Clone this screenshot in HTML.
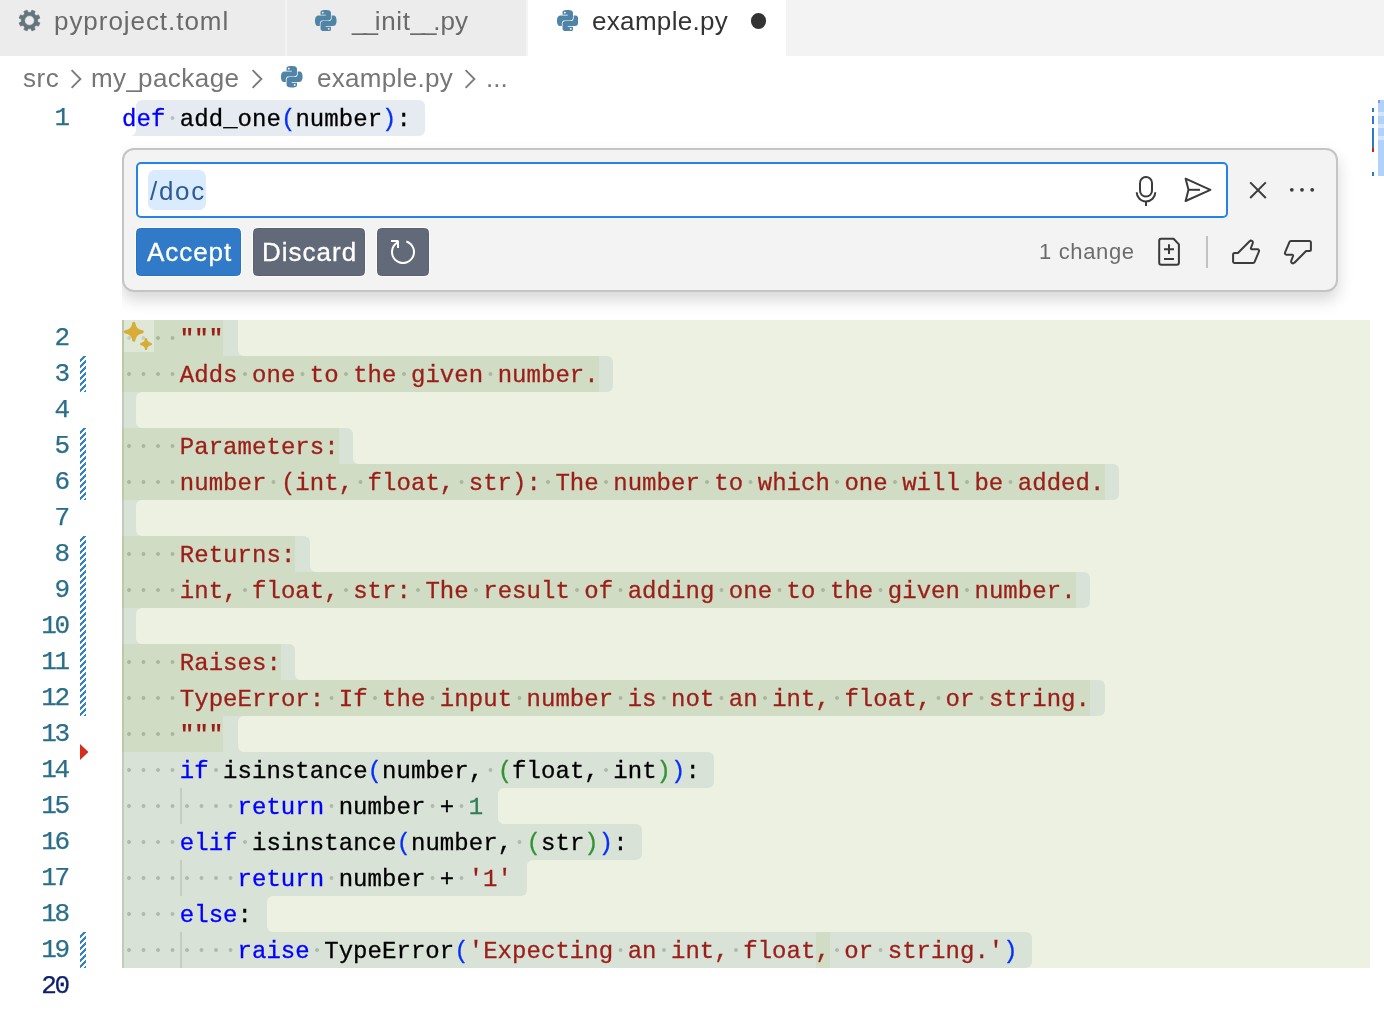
<!DOCTYPE html>
<html><head><meta charset="utf-8"><title>example.py</title>
<style>
*{box-sizing:border-box;margin:0;padding:0}
html,body{width:1384px;height:1010px;overflow:hidden;background:#fff}
body{position:relative;font-family:"Liberation Sans",sans-serif;font-size:26px;color:#333}
.abs{position:absolute}
.ui{position:absolute;white-space:nowrap;line-height:30px;font-size:26px;will-change:transform}
.ln{position:absolute;left:0;width:68px;text-align:right;font-family:"Liberation Mono",monospace;font-size:26px;line-height:36px;height:36px;letter-spacing:-2.2px;margin-top:0px;padding-right:0;-webkit-text-stroke:.25px currentColor;will-change:transform}
.cl{position:absolute;left:122px;height:36px;line-height:36px;font-family:"Liberation Mono",monospace;font-size:24px;letter-spacing:0.047px;white-space:pre;margin-top:1.6px;will-change:transform}
.cl span{-webkit-text-stroke:.3px currentColor}
.cl i{display:inline-block;width:14.45px;height:36px;vertical-align:top;margin-top:-1.6px;letter-spacing:0;background:radial-gradient(circle at 50% 50%, rgba(60,70,60,.26) 1.5px, transparent 2.3px)}
.hatch{background:linear-gradient(135deg,transparent 25%,#3282CE 25%,#3282CE 50%,transparent 50%,transparent 75%,#3282CE 75%);background-size:6px 6px;background-position:0 1px}
</style></head><body>
<!-- TABS -->
<div class="abs" style="left:0;top:0;width:1384px;height:56px;background:#F3F3F3"></div>
<div class="abs" style="left:0;top:0;width:285px;height:56px;background:#ECECEC"></div>
<div class="abs" style="left:287px;top:0;width:239px;height:56px;background:#ECECEC"></div>
<div class="abs" style="left:528px;top:0;width:258px;height:56px;background:#FFFFFF"></div>
<svg class="abs" style="left:0;top:0" width="60" height="56" viewBox="0 0 60 56"><path fill="#64747D" fill-rule="evenodd" stroke="#64747D" stroke-width="0.8" stroke-linejoin="round" d="M30.85 12.41 L31.89 10.17 L35.11 11.51 L34.27 13.83 L36.17 15.73 L38.49 14.89 L39.83 18.11 L37.59 19.15 L37.59 21.85 L39.83 22.89 L38.49 26.11 L36.17 25.27 L34.27 27.17 L35.11 29.49 L31.89 30.83 L30.85 28.59 L28.15 28.59 L27.11 30.83 L23.89 29.49 L24.73 27.17 L22.83 25.27 L20.51 26.11 L19.17 22.89 L21.41 21.85 L21.41 19.15 L19.17 18.11 L20.51 14.89 L22.83 15.73 L24.73 13.83 L23.89 11.51 L27.11 10.17 L28.15 12.41Z M24.60 20.50 a4.9 4.9 0 1 0 9.8 0 a4.9 4.9 0 1 0 -9.8 0Z"/></svg>
<div class="ui" id="t1" style="left:54.3px;top:6.3px;color:#6A6A6A;letter-spacing:.95px">pyproject.toml</div>
<svg class="abs" style="left:315.3px;top:9.8px" width="21.5" height="21.5" viewBox="0 0 24 24"><path fill="#5084A7" d="M14.25.18l.9.2.73.26.59.3.45.32.34.34.25.34.16.33.1.3.04.26.02.2-.01.13V8.5l-.05.63-.13.55-.21.46-.26.38-.3.31-.33.25-.35.19-.35.14-.33.1-.3.07-.26.04-.21.02H8.77l-.69.05-.59.14-.5.22-.41.27-.33.32-.27.35-.2.36-.15.37-.1.35-.07.32-.04.27-.02.21v3.06H3.17l-.21-.03-.28-.07-.32-.12-.35-.18-.36-.26-.36-.36-.35-.46-.32-.59-.28-.73-.21-.88-.14-1.05-.05-1.23.06-1.22.16-1.04.24-.87.32-.71.36-.57.4-.44.42-.33.42-.24.4-.16.36-.1.32-.05.24-.01h.16l.06.01h8.16v-.83H6.18l-.01-2.75-.02-.37.05-.34.11-.31.17-.28.25-.26.31-.23.38-.2.44-.18.51-.15.58-.12.64-.1.71-.06.77-.04.84-.02 1.27.05zm-6.3 1.98l-.23.33-.08.41.08.41.23.34.33.22.41.09.41-.09.33-.22.23-.34.08-.41-.08-.41-.23-.33-.33-.22-.41-.09-.41.09zm13.09 3.95l.28.06.32.12.35.18.36.27.36.35.35.47.32.59.28.73.21.88.14 1.04.05 1.23-.06 1.23-.16 1.04-.24.86-.32.71-.36.57-.4.45-.42.33-.42.24-.4.16-.36.09-.32.05-.24.02-.16-.01h-8.22v.82h5.84l.01 2.76.02.36-.05.34-.11.31-.17.29-.25.25-.31.24-.38.2-.44.17-.51.15-.58.13-.64.09-.71.07-.77.04-.84.01-1.27-.04-1.07-.14-.9-.2-.73-.25-.59-.3-.45-.33-.34-.34-.25-.34-.16-.33-.1-.3-.04-.25-.02-.2.01-.13v-5.34l.05-.64.13-.54.21-.46.26-.38.3-.32.33-.24.35-.2.35-.14.33-.1.3-.06.26-.04.21-.02.13-.01h5.84l.69-.05.59-.14.5-.21.41-.28.33-.32.27-.35.2-.36.15-.36.1-.35.07-.32.04-.28.02-.21V6.07h2.09l.14.01zm-6.47 14.25l-.23.33-.08.41.08.41.23.33.33.23.41.08.41-.08.33-.23.23-.33.08-.41-.08-.41-.23-.33-.33-.23-.41-.08-.41.08z"/></svg>
<div class="ui" id="t2" style="left:352px;top:6.3px;color:#6A6A6A"><span style="letter-spacing:-3.05px">__</span><span style="letter-spacing:.6px">init</span><span style="letter-spacing:-3.05px">__</span>.py</div>
<svg class="abs" style="left:556.8px;top:9.8px" width="21.5" height="21.5" viewBox="0 0 24 24"><path fill="#5084A7" d="M14.25.18l.9.2.73.26.59.3.45.32.34.34.25.34.16.33.1.3.04.26.02.2-.01.13V8.5l-.05.63-.13.55-.21.46-.26.38-.3.31-.33.25-.35.19-.35.14-.33.1-.3.07-.26.04-.21.02H8.77l-.69.05-.59.14-.5.22-.41.27-.33.32-.27.35-.2.36-.15.37-.1.35-.07.32-.04.27-.02.21v3.06H3.17l-.21-.03-.28-.07-.32-.12-.35-.18-.36-.26-.36-.36-.35-.46-.32-.59-.28-.73-.21-.88-.14-1.05-.05-1.23.06-1.22.16-1.04.24-.87.32-.71.36-.57.4-.44.42-.33.42-.24.4-.16.36-.1.32-.05.24-.01h.16l.06.01h8.16v-.83H6.18l-.01-2.75-.02-.37.05-.34.11-.31.17-.28.25-.26.31-.23.38-.2.44-.18.51-.15.58-.12.64-.1.71-.06.77-.04.84-.02 1.27.05zm-6.3 1.98l-.23.33-.08.41.08.41.23.34.33.22.41.09.41-.09.33-.22.23-.34.08-.41-.08-.41-.23-.33-.33-.22-.41-.09-.41.09zm13.09 3.95l.28.06.32.12.35.18.36.27.36.35.35.47.32.59.28.73.21.88.14 1.04.05 1.23-.06 1.23-.16 1.04-.24.86-.32.71-.36.57-.4.45-.42.33-.42.24-.4.16-.36.09-.32.05-.24.02-.16-.01h-8.22v.82h5.84l.01 2.76.02.36-.05.34-.11.31-.17.29-.25.25-.31.24-.38.2-.44.17-.51.15-.58.13-.64.09-.71.07-.77.04-.84.01-1.27-.04-1.07-.14-.9-.2-.73-.25-.59-.3-.45-.33-.34-.34-.25-.34-.16-.33-.1-.3-.04-.25-.02-.2.01-.13v-5.34l.05-.64.13-.54.21-.46.26-.38.3-.32.33-.24.35-.2.35-.14.33-.1.3-.06.26-.04.21-.02.13-.01h5.84l.69-.05.59-.14.5-.21.41-.28.33-.32.27-.35.2-.36.15-.36.1-.35.07-.32.04-.28.02-.21V6.07h2.09l.14.01zm-6.47 14.25l-.23.33-.08.41.08.41.23.33.33.23.41.08.41-.08.33-.23.23-.33.08-.41-.08-.41-.23-.33-.33-.23-.41-.08-.41.08z"/></svg>
<div class="ui" id="t3" style="left:592.3px;top:6.3px;color:#333;letter-spacing:.32px">example.py</div>
<div class="abs" style="left:750.5px;top:13.4px;width:15.2px;height:15.2px;border-radius:50%;background:#333"></div>
<div class="ui" id="b1" style="left:22.5px;top:63.4px;color:#767676;letter-spacing:.5px">src</div>
<svg class="abs" style="left:68.3px;top:66.7px" width="16" height="24" viewBox="0 0 16 24"><path d="M3.6 3.2 L12.4 12 L3.6 20.8" fill="none" stroke="#7B7B7B" stroke-width="1.9" stroke-linejoin="miter"/></svg>
<div class="ui" id="b2" style="left:91.4px;top:63.4px;color:#767676;letter-spacing:.45px">my<span style="letter-spacing:-3px">_</span>package</div>
<svg class="abs" style="left:249.3px;top:66.7px" width="16" height="24" viewBox="0 0 16 24"><path d="M3.6 3.2 L12.4 12 L3.6 20.8" fill="none" stroke="#7B7B7B" stroke-width="1.9" stroke-linejoin="miter"/></svg>
<svg class="abs" style="left:281px;top:66.4px" width="21.5" height="21.5" viewBox="0 0 24 24"><path fill="#5084A7" d="M14.25.18l.9.2.73.26.59.3.45.32.34.34.25.34.16.33.1.3.04.26.02.2-.01.13V8.5l-.05.63-.13.55-.21.46-.26.38-.3.31-.33.25-.35.19-.35.14-.33.1-.3.07-.26.04-.21.02H8.77l-.69.05-.59.14-.5.22-.41.27-.33.32-.27.35-.2.36-.15.37-.1.35-.07.32-.04.27-.02.21v3.06H3.17l-.21-.03-.28-.07-.32-.12-.35-.18-.36-.26-.36-.36-.35-.46-.32-.59-.28-.73-.21-.88-.14-1.05-.05-1.23.06-1.22.16-1.04.24-.87.32-.71.36-.57.4-.44.42-.33.42-.24.4-.16.36-.1.32-.05.24-.01h.16l.06.01h8.16v-.83H6.18l-.01-2.75-.02-.37.05-.34.11-.31.17-.28.25-.26.31-.23.38-.2.44-.18.51-.15.58-.12.64-.1.71-.06.77-.04.84-.02 1.27.05zm-6.3 1.98l-.23.33-.08.41.08.41.23.34.33.22.41.09.41-.09.33-.22.23-.34.08-.41-.08-.41-.23-.33-.33-.22-.41-.09-.41.09zm13.09 3.95l.28.06.32.12.35.18.36.27.36.35.35.47.32.59.28.73.21.88.14 1.04.05 1.23-.06 1.23-.16 1.04-.24.86-.32.71-.36.57-.4.45-.42.33-.42.24-.4.16-.36.09-.32.05-.24.02-.16-.01h-8.22v.82h5.84l.01 2.76.02.36-.05.34-.11.31-.17.29-.25.25-.31.24-.38.2-.44.17-.51.15-.58.13-.64.09-.71.07-.77.04-.84.01-1.27-.04-1.07-.14-.9-.2-.73-.25-.59-.3-.45-.33-.34-.34-.25-.34-.16-.33-.1-.3-.04-.25-.02-.2.01-.13v-5.34l.05-.64.13-.54.21-.46.26-.38.3-.32.33-.24.35-.2.35-.14.33-.1.3-.06.26-.04.21-.02.13-.01h5.84l.69-.05.59-.14.5-.21.41-.28.33-.32.27-.35.2-.36.15-.36.1-.35.07-.32.04-.28.02-.21V6.07h2.09l.14.01zm-6.47 14.25l-.23.33-.08.41.08.41.23.33.33.23.41.08.41-.08.33-.23.23-.33.08-.41-.08-.41-.23-.33-.33-.23-.41-.08-.41.08z"/></svg>
<div class="ui" id="b3" style="left:316.8px;top:63.4px;color:#767676;letter-spacing:.31px">example.py</div>
<svg class="abs" style="left:462px;top:66.7px" width="16" height="24" viewBox="0 0 16 24"><path d="M3.6 3.2 L12.4 12 L3.6 20.8" fill="none" stroke="#7B7B7B" stroke-width="1.9" stroke-linejoin="miter"/></svg>
<div class="ui" id="b4" style="left:486px;top:63.4px;color:#767676">...</div>
<!-- CODE -->
<div class="abs" style="left:122px;top:320px;width:1248px;height:648px;background:#EDF1E1"></div>
<div class="abs" style="left:136.4px;top:100px;width:289.0px;height:36px;background:#E5EBF1;border-radius:6px 6px 6px 0"></div>
<div class="abs" style="left:130.4px;top:130px;width:6px;height:6px;background:radial-gradient(circle at 0% 0%, transparent 5.5px, #E5EBF1 6.5px)"></div>
<div class="abs" style="left:122px;top:320px;width:115.6px;height:36px;background:#D8E2D7;border-radius:0 0px 0px 0"></div>
<div class="abs" style="left:237.6px;top:350px;width:6px;height:6px;background:radial-gradient(circle at 100% 0%, transparent 5.5px, #D8E2D7 6.5px)"></div>
<div class="abs" style="left:122px;top:356px;width:491.3px;height:36px;background:#D8E2D7;border-radius:0 6px 6px 0"></div>
<div class="abs" style="left:122px;top:392px;width:14.4px;height:36px;background:#D8E2D7;border-radius:0 0px 0px 0"></div>
<div class="abs" style="left:136.4px;top:392px;width:6px;height:6px;background:radial-gradient(circle at 100% 100%, transparent 5.5px, #D8E2D7 6.5px)"></div>
<div class="abs" style="left:136.4px;top:422px;width:6px;height:6px;background:radial-gradient(circle at 100% 0%, transparent 5.5px, #D8E2D7 6.5px)"></div>
<div class="abs" style="left:122px;top:428px;width:231.2px;height:36px;background:#D8E2D7;border-radius:0 6px 0px 0"></div>
<div class="abs" style="left:353.2px;top:458px;width:6px;height:6px;background:radial-gradient(circle at 100% 0%, transparent 5.5px, #D8E2D7 6.5px)"></div>
<div class="abs" style="left:122px;top:464px;width:997.0px;height:36px;background:#D8E2D7;border-radius:0 6px 6px 0"></div>
<div class="abs" style="left:122px;top:500px;width:14.4px;height:36px;background:#D8E2D7;border-radius:0 0px 0px 0"></div>
<div class="abs" style="left:136.4px;top:500px;width:6px;height:6px;background:radial-gradient(circle at 100% 100%, transparent 5.5px, #D8E2D7 6.5px)"></div>
<div class="abs" style="left:136.4px;top:530px;width:6px;height:6px;background:radial-gradient(circle at 100% 0%, transparent 5.5px, #D8E2D7 6.5px)"></div>
<div class="abs" style="left:122px;top:536px;width:187.8px;height:36px;background:#D8E2D7;border-radius:0 6px 0px 0"></div>
<div class="abs" style="left:309.9px;top:566px;width:6px;height:6px;background:radial-gradient(circle at 100% 0%, transparent 5.5px, #D8E2D7 6.5px)"></div>
<div class="abs" style="left:122px;top:572px;width:968.1px;height:36px;background:#D8E2D7;border-radius:0 6px 6px 0"></div>
<div class="abs" style="left:122px;top:608px;width:14.4px;height:36px;background:#D8E2D7;border-radius:0 0px 0px 0"></div>
<div class="abs" style="left:136.4px;top:608px;width:6px;height:6px;background:radial-gradient(circle at 100% 100%, transparent 5.5px, #D8E2D7 6.5px)"></div>
<div class="abs" style="left:136.4px;top:638px;width:6px;height:6px;background:radial-gradient(circle at 100% 0%, transparent 5.5px, #D8E2D7 6.5px)"></div>
<div class="abs" style="left:122px;top:644px;width:173.4px;height:36px;background:#D8E2D7;border-radius:0 6px 0px 0"></div>
<div class="abs" style="left:295.4px;top:674px;width:6px;height:6px;background:radial-gradient(circle at 100% 0%, transparent 5.5px, #D8E2D7 6.5px)"></div>
<div class="abs" style="left:122px;top:680px;width:982.6px;height:36px;background:#D8E2D7;border-radius:0 6px 6px 0"></div>
<div class="abs" style="left:122px;top:716px;width:115.6px;height:36px;background:#D8E2D7;border-radius:0 0px 0px 0"></div>
<div class="abs" style="left:237.6px;top:716px;width:6px;height:6px;background:radial-gradient(circle at 100% 100%, transparent 5.5px, #D8E2D7 6.5px)"></div>
<div class="abs" style="left:237.6px;top:746px;width:6px;height:6px;background:radial-gradient(circle at 100% 0%, transparent 5.5px, #D8E2D7 6.5px)"></div>
<div class="abs" style="left:122px;top:752px;width:592.4px;height:36px;background:#D8E2D7;border-radius:0 6px 6px 0"></div>
<div class="abs" style="left:122px;top:788px;width:375.7px;height:36px;background:#D8E2D7;border-radius:0 0px 0px 0"></div>
<div class="abs" style="left:497.7px;top:788px;width:6px;height:6px;background:radial-gradient(circle at 100% 100%, transparent 5.5px, #D8E2D7 6.5px)"></div>
<div class="abs" style="left:497.7px;top:818px;width:6px;height:6px;background:radial-gradient(circle at 100% 0%, transparent 5.5px, #D8E2D7 6.5px)"></div>
<div class="abs" style="left:122px;top:824px;width:520.2px;height:36px;background:#D8E2D7;border-radius:0 6px 6px 0"></div>
<div class="abs" style="left:122px;top:860px;width:404.6px;height:36px;background:#D8E2D7;border-radius:0 0px 6px 0"></div>
<div class="abs" style="left:526.6px;top:860px;width:6px;height:6px;background:radial-gradient(circle at 100% 100%, transparent 5.5px, #D8E2D7 6.5px)"></div>
<div class="abs" style="left:122px;top:896px;width:144.5px;height:36px;background:#D8E2D7;border-radius:0 0px 0px 0"></div>
<div class="abs" style="left:266.5px;top:896px;width:6px;height:6px;background:radial-gradient(circle at 100% 100%, transparent 5.5px, #D8E2D7 6.5px)"></div>
<div class="abs" style="left:266.5px;top:926px;width:6px;height:6px;background:radial-gradient(circle at 100% 0%, transparent 5.5px, #D8E2D7 6.5px)"></div>
<div class="abs" style="left:122px;top:932px;width:910.3px;height:36px;background:#D8E2D7;border-radius:0 6px 6px 0"></div>
<div class="abs" style="left:122px;top:320px;width:101.1px;height:36px;background:#D0DDC4"></div>
<div class="abs" style="left:122px;top:356px;width:476.8px;height:36px;background:#D0DDC4"></div>
<div class="abs" style="left:122px;top:428px;width:216.8px;height:36px;background:#D0DDC4"></div>
<div class="abs" style="left:122px;top:464px;width:982.6px;height:36px;background:#D0DDC4"></div>
<div class="abs" style="left:122px;top:536px;width:173.4px;height:36px;background:#D0DDC4"></div>
<div class="abs" style="left:122px;top:572px;width:953.7px;height:36px;background:#D0DDC4"></div>
<div class="abs" style="left:122px;top:644px;width:158.9px;height:36px;background:#D0DDC4"></div>
<div class="abs" style="left:122px;top:680px;width:968.1px;height:36px;background:#D0DDC4"></div>
<div class="abs" style="left:122px;top:716px;width:101.1px;height:36px;background:#D0DDC4"></div>
<div class="abs" style="left:815.6px;top:932px;width:14.4px;height:36px;background:#D0DDC4"></div>
<div class="abs" style="left:122px;top:320px;width:2px;height:648px;background:rgba(110,120,60,.2)"></div>
<div class="abs" style="left:180px;top:788px;width:2px;height:36px;background:#C6CDBE"></div>
<div class="abs" style="left:180px;top:860px;width:2px;height:36px;background:#C6CDBE"></div>
<div class="abs" style="left:180px;top:932px;width:2px;height:36px;background:#C6CDBE"></div>
<div class="ln" style="top:100px;color:#2A6E8A">1</div>
<div class="cl" style="top:100px"><span style="color:#0000FF">def</span><i></i><span style="color:#000000">add_one</span><span style="color:#0431FA">(</span><span style="color:#000000">number</span><span style="color:#0431FA">)</span><span style="color:#000000">:</span></div>
<div class="ln" style="top:320px;color:#2A6E8A">2</div>
<div class="cl" style="top:320px"><i></i><i></i><i></i><i></i><span style="color:#9B1E19;font-weight:bold;-webkit-text-stroke:0">&quot;&quot;&quot;</span></div>
<div class="ln" style="top:356px;color:#2A6E8A">3</div>
<div class="cl" style="top:356px"><i></i><i></i><i></i><i></i><span style="color:#9B1E19">Adds</span><i></i><span style="color:#9B1E19">one</span><i></i><span style="color:#9B1E19">to</span><i></i><span style="color:#9B1E19">the</span><i></i><span style="color:#9B1E19">given</span><i></i><span style="color:#9B1E19">number.</span></div>
<div class="ln" style="top:392px;color:#2A6E8A">4</div>
<div class="ln" style="top:428px;color:#2A6E8A">5</div>
<div class="cl" style="top:428px"><i></i><i></i><i></i><i></i><span style="color:#9B1E19">Parameters:</span></div>
<div class="ln" style="top:464px;color:#2A6E8A">6</div>
<div class="cl" style="top:464px"><i></i><i></i><i></i><i></i><span style="color:#9B1E19">number</span><i></i><span style="color:#9B1E19">(int,</span><i></i><span style="color:#9B1E19">float,</span><i></i><span style="color:#9B1E19">str):</span><i></i><span style="color:#9B1E19">The</span><i></i><span style="color:#9B1E19">number</span><i></i><span style="color:#9B1E19">to</span><i></i><span style="color:#9B1E19">which</span><i></i><span style="color:#9B1E19">one</span><i></i><span style="color:#9B1E19">will</span><i></i><span style="color:#9B1E19">be</span><i></i><span style="color:#9B1E19">added.</span></div>
<div class="ln" style="top:500px;color:#2A6E8A">7</div>
<div class="ln" style="top:536px;color:#2A6E8A">8</div>
<div class="cl" style="top:536px"><i></i><i></i><i></i><i></i><span style="color:#9B1E19">Returns:</span></div>
<div class="ln" style="top:572px;color:#2A6E8A">9</div>
<div class="cl" style="top:572px"><i></i><i></i><i></i><i></i><span style="color:#9B1E19">int,</span><i></i><span style="color:#9B1E19">float,</span><i></i><span style="color:#9B1E19">str:</span><i></i><span style="color:#9B1E19">The</span><i></i><span style="color:#9B1E19">result</span><i></i><span style="color:#9B1E19">of</span><i></i><span style="color:#9B1E19">adding</span><i></i><span style="color:#9B1E19">one</span><i></i><span style="color:#9B1E19">to</span><i></i><span style="color:#9B1E19">the</span><i></i><span style="color:#9B1E19">given</span><i></i><span style="color:#9B1E19">number.</span></div>
<div class="ln" style="top:608px;color:#2A6E8A">10</div>
<div class="ln" style="top:644px;color:#2A6E8A">11</div>
<div class="cl" style="top:644px"><i></i><i></i><i></i><i></i><span style="color:#9B1E19">Raises:</span></div>
<div class="ln" style="top:680px;color:#2A6E8A">12</div>
<div class="cl" style="top:680px"><i></i><i></i><i></i><i></i><span style="color:#9B1E19">TypeError:</span><i></i><span style="color:#9B1E19">If</span><i></i><span style="color:#9B1E19">the</span><i></i><span style="color:#9B1E19">input</span><i></i><span style="color:#9B1E19">number</span><i></i><span style="color:#9B1E19">is</span><i></i><span style="color:#9B1E19">not</span><i></i><span style="color:#9B1E19">an</span><i></i><span style="color:#9B1E19">int,</span><i></i><span style="color:#9B1E19">float,</span><i></i><span style="color:#9B1E19">or</span><i></i><span style="color:#9B1E19">string.</span></div>
<div class="ln" style="top:716px;color:#2A6E8A">13</div>
<div class="cl" style="top:716px"><i></i><i></i><i></i><i></i><span style="color:#9B1E19;font-weight:bold;-webkit-text-stroke:0">&quot;&quot;&quot;</span></div>
<div class="ln" style="top:752px;color:#2A6E8A">14</div>
<div class="cl" style="top:752px"><i></i><i></i><i></i><i></i><span style="color:#0000FF">if</span><i></i><span style="color:#000000">isinstance</span><span style="color:#0431FA">(</span><span style="color:#000000">number,</span><i></i><span style="color:#319331">(</span><span style="color:#000000">float,</span><i></i><span style="color:#000000">int</span><span style="color:#319331">)</span><span style="color:#0431FA">)</span><span style="color:#000000">:</span></div>
<div class="ln" style="top:788px;color:#2A6E8A">15</div>
<div class="cl" style="top:788px"><i></i><i></i><i></i><i></i><i></i><i></i><i></i><i></i><span style="color:#0000FF">return</span><i></i><span style="color:#000000">number</span><i></i><span style="color:#000000">+</span><i></i><span style="color:#308055">1</span></div>
<div class="ln" style="top:824px;color:#2A6E8A">16</div>
<div class="cl" style="top:824px"><i></i><i></i><i></i><i></i><span style="color:#0000FF">elif</span><i></i><span style="color:#000000">isinstance</span><span style="color:#0431FA">(</span><span style="color:#000000">number,</span><i></i><span style="color:#319331">(</span><span style="color:#000000">str</span><span style="color:#319331">)</span><span style="color:#0431FA">)</span><span style="color:#000000">:</span></div>
<div class="ln" style="top:860px;color:#2A6E8A">17</div>
<div class="cl" style="top:860px"><i></i><i></i><i></i><i></i><i></i><i></i><i></i><i></i><span style="color:#0000FF">return</span><i></i><span style="color:#000000">number</span><i></i><span style="color:#000000">+</span><i></i><span style="color:#9B1E19">&#x27;1&#x27;</span></div>
<div class="ln" style="top:896px;color:#2A6E8A">18</div>
<div class="cl" style="top:896px"><i></i><i></i><i></i><i></i><span style="color:#0000FF">else</span><span style="color:#000000">:</span></div>
<div class="ln" style="top:932px;color:#2A6E8A">19</div>
<div class="cl" style="top:932px"><i></i><i></i><i></i><i></i><i></i><i></i><i></i><i></i><span style="color:#0000FF">raise</span><i></i><span style="color:#000000">TypeError</span><span style="color:#0431FA">(</span><span style="color:#9B1E19">&#x27;Expecting</span><i></i><span style="color:#9B1E19">an</span><i></i><span style="color:#9B1E19">int,</span><i></i><span style="color:#9B1E19">float,</span><i></i><span style="color:#9B1E19">or</span><i></i><span style="color:#9B1E19">string.&#x27;</span><span style="color:#0431FA">)</span></div>
<div class="ln" style="top:968px;color:#0B1F6B">20</div>
<div class="abs hatch" style="left:80px;top:356px;width:6px;height:36px"></div>
<div class="abs hatch" style="left:80px;top:428px;width:6px;height:72px"></div>
<div class="abs hatch" style="left:80px;top:536px;width:6px;height:180px"></div>
<div class="abs hatch" style="left:80px;top:932px;width:6px;height:36px"></div>
<svg class="abs" style="left:80px;top:744px" width="9" height="16" viewBox="0 0 9 16"><path d="M0 0L8.5 8L0 16Z" fill="#D3301F"/></svg>
<!-- CHAT -->
<div class="abs" style="left:122px;top:136px;width:1248px;height:184px;overflow:hidden">
<div class="abs" style="left:0;top:12px;width:1215.5px;height:143.5px;background:#F3F3F3;border:2px solid #C4C4C4;border-radius:12px;box-shadow:0 8px 16px rgba(0,0,0,.16)"></div>
</div>
<div class="abs" style="left:136px;top:162px;width:1092px;height:56px;background:#fff;border:2px solid #2583E6;border-radius:5px"></div>
<div class="abs" style="left:148px;top:170px;width:58px;height:40px;background:#D9EBFC;border-radius:7px"></div>
<div class="ui" id="doc" style="left:150px;top:176px;color:#2C5A94;letter-spacing:1.7px">/doc</div>
<svg class="abs" style="left:1130px;top:174px" width="32" height="34" viewBox="0 0 32 34" fill="none" stroke="#3B3B3B" stroke-width="2" stroke-linecap="butt"><rect x="10" y="3" width="12" height="19.6" rx="6" ry="6"/><path d="M6.7 18.2 A9.3 9.3 0 0 0 25.3 18.2"/><path d="M16 27.2V32"/></svg>
<svg class="abs" style="left:1182px;top:174px" width="32" height="32" viewBox="0 0 32 32" fill="none" stroke="#3B3B3B" stroke-width="2" stroke-linejoin="round"><path d="M3.6 4.6 L28.4 15.8 L3.6 27 L6.5 15.8 Z"/><path d="M6.3 15.8H18"/></svg>
<svg class="abs" style="left:1242px;top:174px" width="32" height="32" viewBox="0 0 32 32" fill="none" stroke="#3B3B3B" stroke-width="2"><path d="M8.2 8.4L23.8 24M23.8 8.4L8.2 24"/></svg>
<svg class="abs" style="left:1286px;top:174px" width="32" height="32" viewBox="0 0 32 32" fill="#3B3B3B"><circle cx="5.8" cy="15.8" r="1.9"/><circle cx="16" cy="15.8" r="1.9"/><circle cx="26.2" cy="15.8" r="1.9"/></svg>
<div class="abs" style="left:136px;top:228px;width:105px;height:48px;background:#317AC7;border:1px solid #2774C6;border-radius:4.5px;box-shadow:0 0 0 1px rgba(255,253,250,.8)"></div>
<div class="ui" id="acc" style="left:147px;top:237.3px;color:#fff;letter-spacing:.95px;-webkit-text-stroke:.3px #fff">Accept</div>
<div class="abs" style="left:253px;top:228px;width:112px;height:48px;background:#626A79;border:1px solid #596273;border-radius:4.5px;box-shadow:0 0 0 1px rgba(255,253,250,.8)"></div>
<div class="ui" id="dis" style="left:262.3px;top:237.3px;color:#fff;letter-spacing:1px;-webkit-text-stroke:.3px #fff">Discard</div>
<div class="abs" style="left:377px;top:228px;width:52px;height:48px;background:#626A79;border:1px solid #596273;border-radius:4.5px;box-shadow:0 0 0 1px rgba(255,253,250,.8)"></div>
<svg class="abs" style="left:387.2px;top:236px" width="32" height="32" viewBox="0 0 16 16"><path fill="#fff" fill-rule="evenodd" clip-rule="evenodd" d="M4.681 3H2V2h3.5l.5.5V6H5V4a5 5 0 1 0 4.53-.761l.302-.954A6 6 0 1 1 4.681 3z"/></svg>
<div class="ui" id="chg" style="left:1039.2px;top:237.4px;font-size:22px;color:#6C6C6C;letter-spacing:.64px">1 change</div>
<svg class="abs" style="left:1153px;top:236px" width="32" height="32" viewBox="0 0 32 32" fill="none" stroke="#3B3B3B" stroke-width="2" stroke-linejoin="round"><path d="M8.2 2.8H20.6L25.9 8.4V26.8a2 2 0 0 1-2 2H8.2a2 2 0 0 1-2-2V4.8a2 2 0 0 1 2-2Z"/><path d="M11 13.2H21M16 8.3V18.1M11 22.9H21" stroke-linejoin="miter"/></svg>
<div class="abs" style="left:1206px;top:236px;width:2px;height:31.5px;background:#C2C2C2"></div>
<svg class="abs" style="left:1230px;top:236px" width="32" height="32" viewBox="0 0 32 32" fill="none" stroke="#3B3B3B" stroke-width="2" stroke-linejoin="round"><path d="M3.1 25.4 V18.5 a1.5 1.5 0 0 1 1.5-1.5 H7.9 L19.6 5.3 a1.9 1.9 0 0 1 3.2 1.9 L20.9 12 a1 1 0 0 0 0.95 1.3 H27.6 a1.5 1.5 0 0 1 1.4 2.1 L24.6 25.9 a1.6 1.6 0 0 1-1.5 1 H4.6 a1.5 1.5 0 0 1-1.5-1.5 Z"/></svg>
<svg class="abs" style="left:1282px;top:236px" width="32" height="32" viewBox="0 0 32 32" fill="none" stroke="#3B3B3B" stroke-width="2" stroke-linejoin="round"><g transform="rotate(180 16 16)"><path d="M3.1 25.4 V18.5 a1.5 1.5 0 0 1 1.5-1.5 H7.9 L19.6 5.3 a1.9 1.9 0 0 1 3.2 1.9 L20.9 12 a1 1 0 0 0 0.95 1.3 H27.6 a1.5 1.5 0 0 1 1.4 2.1 L24.6 25.9 a1.6 1.6 0 0 1-1.5 1 H4.6 a1.5 1.5 0 0 1-1.5-1.5 Z"/></g></svg>
<div class="abs" style="left:124px;top:320px;width:30px;height:32px;background:rgba(255,255,255,.33)"></div>
<svg class="abs" style="left:122px;top:320px" width="32" height="32" viewBox="0 0 32 32"><path fill="#D7AD37" d="M11.8 3.4000000000000004 Q12.74 10.860000000000001 20.200000000000003 11.8 Q12.74 12.74 11.8 20.200000000000003 Q10.860000000000001 12.74 3.4000000000000004 11.8 Q10.860000000000001 10.860000000000001 11.8 3.4000000000000004Z" stroke="#D7AD37" stroke-width="3.2" stroke-linejoin="round"/><path fill="#D7AD37" d="M24 19.2 Q24.5 23.5 28.8 24 Q24.5 24.5 24 28.8 Q23.5 24.5 19.2 24 Q23.5 23.5 24 19.2Z" stroke="#D7AD37" stroke-width="2.4" stroke-linejoin="round"/></svg>
<!-- RULER -->
<div class="abs" style="left:1378px;top:100px;width:6px;height:76px;background:#B0D1F8"></div>
<div class="abs" style="left:1378px;top:112px;width:6px;height:4px;background:#D5E5FA"></div>
<div class="abs" style="left:1378px;top:124px;width:6px;height:4px;background:#D5E5FA"></div>
<div class="abs" style="left:1378px;top:136px;width:6px;height:4px;background:#D5E5FA"></div>
<div class="abs" style="left:1378px;top:100px;width:2px;height:2.5px;background:#8E94F6"></div>
<div class="abs" style="left:1372px;top:108px;width:2px;height:4px;background:#2B7BC8"></div>
<div class="abs" style="left:1372px;top:116px;width:2px;height:8px;background:#2B7BC8"></div>
<div class="abs" style="left:1372px;top:128px;width:2px;height:20px;background:#2B7BC8"></div>
<div class="abs" style="left:1372px;top:172px;width:2px;height:4px;background:#2B7BC8"></div>
<div class="abs" style="left:1372px;top:148px;width:2px;height:4px;background:#D3201A"></div>
</body></html>
